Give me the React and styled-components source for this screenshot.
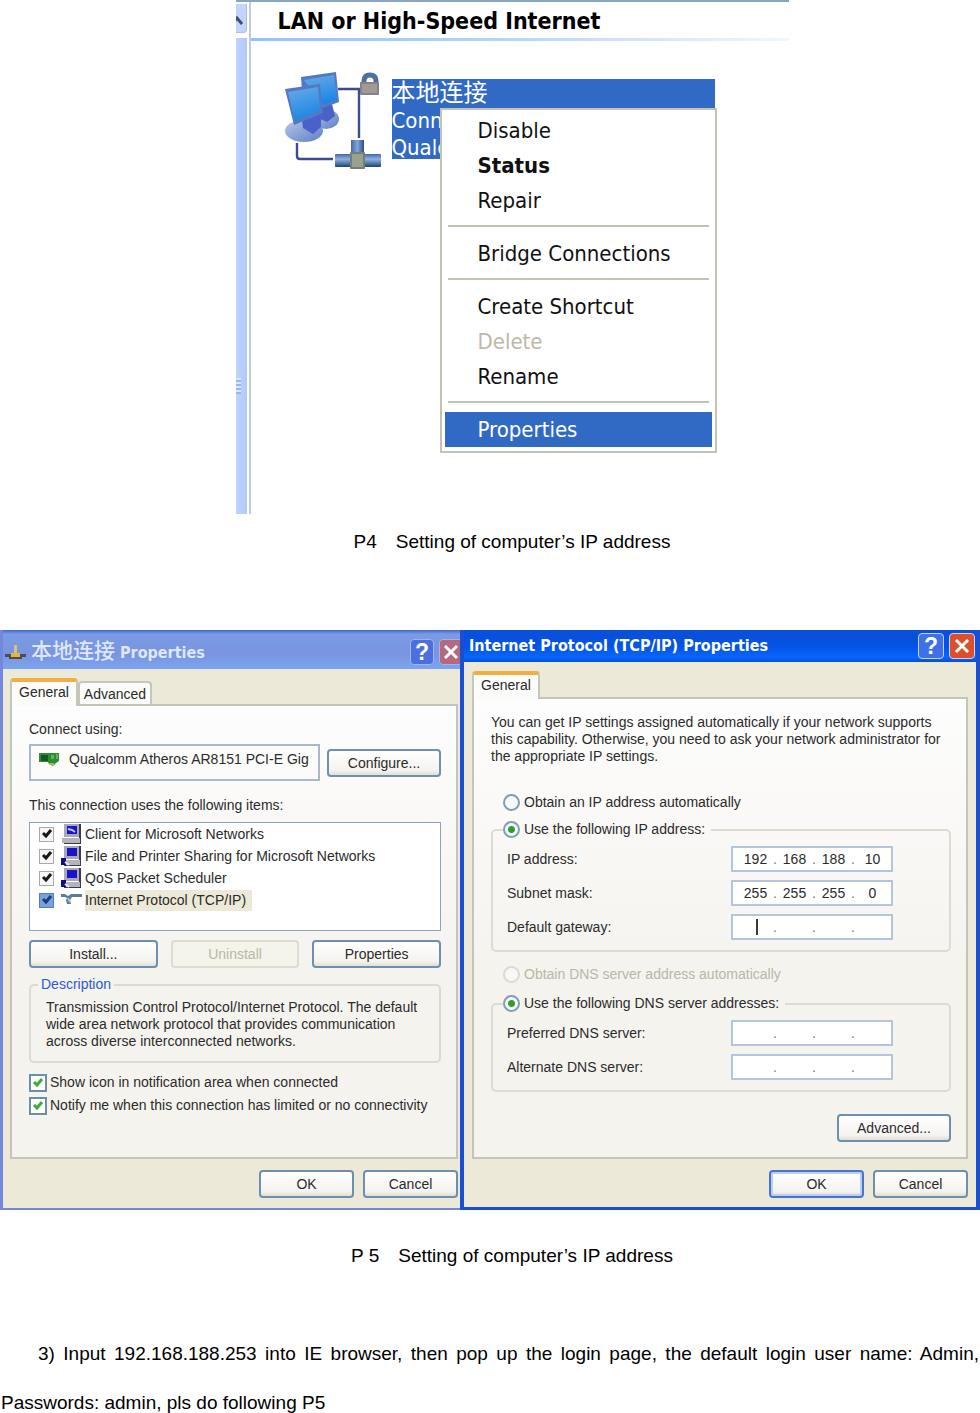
import React from "react";
import styled, { createGlobalStyle, css } from "styled-components";

const menuGroups = [
  [
    { label: "Disable" },
    { label: "Status", bold: true },
    { label: "Repair" },
  ],
  [{ label: "Bridge Connections" }],
  [
    { label: "Create Shortcut" },
    { label: "Delete", disabled: true },
    { label: "Rename" },
  ],
  [{ label: "Properties", active: true }],
];

const components = [
  { label: "Client for Microsoft Networks", icon: "client" },
  { label: "File and Printer Sharing for Microsoft Networks", icon: "service" },
  { label: "QoS Packet Scheduler", icon: "service" },
  { label: "Internet Protocol (TCP/IP)", icon: "protocol", selected: true },
];

const ipRows = [
  { label: "IP address:", octets: ["192", "168", "188", "10"] },
  { label: "Subnet mask:", octets: ["255", "255", "255", "0"] },
  { label: "Default gateway:", octets: ["", "", "", ""], focused: true },
];

const dnsRows = [
  { label: "Preferred DNS server:", octets: ["", "", "", ""] },
  { label: "Alternate DNS server:", octets: ["", "", "", ""] },
];

function NetworkIcon() {
  return (
    <NetworkSvg viewBox="0 0 100 102" aria-hidden="true">
      <defs>
        <linearGradient id="screen" x1="0" y1="0" x2="0.3" y2="1">
          <stop offset="0" stopColor="#6aaae6" />
          <stop offset="1" stopColor="#1c88e4" />
        </linearGradient>
        <linearGradient id="base" x1="0" y1="0" x2="1" y2="1">
          <stop offset="0" stopColor="#b4c8ea" />
          <stop offset="1" stopColor="#5f7fc4" />
        </linearGradient>
        <linearGradient id="pipe" x1="0" y1="0" x2="0" y2="1">
          <stop offset="0" stopColor="#4668a4" />
          <stop offset="0.4" stopColor="#8fb2e0" />
          <stop offset="1" stopColor="#1f3f78" />
        </linearGradient>
        <linearGradient id="pipeUp" x1="0" y1="0" x2="1" y2="0">
          <stop offset="0" stopColor="#4668a4" />
          <stop offset="0.5" stopColor="#83a6d8" />
          <stop offset="1" stopColor="#2c4c86" />
        </linearGradient>
      </defs>
      <path
        d="M54 19h21v49M13 73v13q0 3 3 3h33"
        fill="none"
        stroke="#3f4a94"
        strokeWidth="2.4"
      />
      <ellipse cx="42" cy="49" rx="13" ry="10" fill="url(#base)" />
      <path d="M35 38l13-4 3 12-8 6-9-4z" fill="#4a62c8" />
      <path d="M17 7l35-5 3 30-16 6-20-4z" fill="#5379c4" />
      <path d="M20 10l30-5 3 25-15 5z" fill="url(#screen)" />
      <ellipse cx="20" cy="61" rx="19" ry="11" fill="url(#base)" />
      <path d="M18 50l19-7v14l-8 7-10-6z" fill="#4a60cc" />
      <path d="M1 19l35-5 3 29-29 12z" fill="#5379c4" />
      <path d="M4 22l30-5 2 23-25 11z" fill="url(#screen)" />
      <path
        d="M80 14v-3q0-6 6-6t6 6v3"
        fill="none"
        stroke="#4f6f9f"
        strokeWidth="5"
      />
      <rect x="76" y="12" width="19" height="13" rx="1" fill="#85808a" />
      <rect x="78" y="14" width="15" height="9" fill="#a39994" />
      <rect x="67" y="70" width="13" height="15" fill="url(#pipeUp)" />
      <rect x="51" y="84" width="46" height="13" rx="1" fill="url(#pipe)" />
      <rect x="66" y="82" width="15" height="17" rx="1" fill="#6f8078" />
      <rect x="68" y="84" width="11" height="13" fill="#97a18d" />
    </NetworkSvg>
  );
}

function ComponentIcon({ type }) {
  if (type === "protocol") {
    return (
      <svg width="22" height="20" viewBox="0 0 22 20" aria-hidden="true">
        <path d="M0 4h4l3 2 3-2h11v3H11l-2 3 1 4H6l-1-4 1-2-2-1H0z" fill="#5b7d9c" />
        <path d="M7 8l2 4" stroke="#a8c4d8" strokeWidth="2" />
      </svg>
    );
  }
  return (
    <svg width="22" height="22" viewBox="0 0 22 22" aria-hidden="true">
      <path d="M18 1h2v20H3v-3h15z" fill="#3a3a4a" />
      <rect x="3" y="1" width="15" height="13" fill="#a8a8b8" />
      <rect x="6" y="3" width="10" height="8" fill="#1a14c8" />
      <rect x="1" y="15" width="18" height="5" fill="#b4b4be" />
      {type === "client" ? (
        <path d="M7 6l4 1 3 2" stroke="#b9c4ff" strokeWidth="2" fill="none" />
      ) : (
        <>
          <path d="M0 13h5v7H0z" fill="#120c86" />
          <path d="M4 17l4 3" stroke="#e6e6ee" strokeWidth="2" />
        </>
      )}
    </svg>
  );
}

function AdapterIcon() {
  return (
    <svg width="21" height="15" viewBox="0 0 21 15" aria-hidden="true">
      <path d="M0 1h20v8l-3 2-3 3-4-2-1-2H0z" fill="#2d8a36" />
      <path d="M2 3h7v6H2z" fill="#14581f" />
      <path d="M12 3h3v4h-3zM17 2h2v5h-2z" fill="#5bb95a" />
      <path d="M9 11h6v2H11z" fill="#a9b848" />
    </svg>
  );
}

function PlugIcon() {
  return (
    <svg width="21" height="17" viewBox="0 0 21 17" aria-hidden="true">
      <path d="M9 1h3v9H9z" fill="#dcc26a" />
      <path d="M6 9h9l1 5H5z" fill="#e0b64a" />
      <path d="M0 10h6v3H0zM15 10h6v3h-6z" fill="#4a4c58" />
      <path d="M4 14h13" stroke="#5d4c2c" strokeWidth="2" />
    </svg>
  );
}

function CloseIcon() {
  return (
    <svg width="18" height="18" viewBox="0 0 18 18" aria-hidden="true">
      <path d="M3 3l12 12M15 3L3 15" stroke="#fff" strokeWidth="3" />
    </svg>
  );
}

function IpField({ id, label, octets, focused }) {
  return (
    <FieldRow>
      <label htmlFor={`${id}-0`}>{label}</label>
      <IpBox>
        {octets.map((value, i) => (
          <React.Fragment key={i}>
            {i > 0 && <Dot>.</Dot>}
            <OctetCell $caret={focused && i === 0}>
              <Octet
                id={`${id}-${i}`}
                defaultValue={value}
                aria-label={`${label} ${i + 1}`}
              />
            </OctetCell>
          </React.Fragment>
        ))}
      </IpBox>
    </FieldRow>
  );
}

function ConnectionFigure() {
  return (
    <Explorer>
      <Sidebar>
        <SidebarTop>
          <svg width="8" height="12" viewBox="0 0 8 12" aria-hidden="true">
            <path d="M-4 9L1 3l5 6" fill="none" stroke="#44506e" strokeWidth="3" />
          </svg>
        </SidebarTop>
        <SidebarThumb>
          <Grip />
        </SidebarThumb>
      </Sidebar>
      <ExplorerBody>
        <GroupTitle>LAN or High-Speed Internet</GroupTitle>
        <Connection>
          <NetworkIcon />
          <ConnectionText>
            <span>本地连接</span>
            <span>Conn</span>
            <span>Qualc</span>
            <Menu>
              {menuGroups.map((group, i) => (
                <React.Fragment key={i}>
                  {i > 0 && <Separator />}
                  {group.map((item) => (
                    <MenuItem
                      key={item.label}
                      type="button"
                      disabled={item.disabled}
                      $bold={item.bold}
                      $active={item.active}
                    >
                      {item.label}
                    </MenuItem>
                  ))}
                </React.Fragment>
              ))}
            </Menu>
          </ConnectionText>
        </Connection>
      </ExplorerBody>
    </Explorer>
  );
}

function ConnectionDialog() {
  return (
    <Dialog $inactive>
      <TitleBar $inactive>
        <PlugIcon />
        <Title>
          <ChineseName>本地连接</ChineseName> Properties
        </Title>
        <TitleButton type="button" aria-label="Help" $inactive>
          ?
        </TitleButton>
        <TitleButton type="button" aria-label="Close" $inactive $close>
          <CloseIcon />
        </TitleButton>
      </TitleBar>
      <DialogBody $inactive>
        <Tabs>
          <Tab type="button" $active>
            General
          </Tab>
          <Tab type="button">Advanced</Tab>
        </Tabs>
        <Panel>
          <Text>Connect using:</Text>
          <AdapterRow>
            <AdapterBox>
              <AdapterIcon />
              <AdapterName>Qualcomm Atheros AR8151 PCI-E Gig</AdapterName>
            </AdapterBox>
            <Button type="button" $width={114}>
              Configure...
            </Button>
          </AdapterRow>
          <Text>This connection uses the following items:</Text>
          <List>
            {components.map((item) => (
              <ListRow key={item.label}>
                <ListCheck type="checkbox" defaultChecked $selected={item.selected} />
                <ComponentIcon type={item.icon} />
                <ListLabel $selected={item.selected}>{item.label}</ListLabel>
              </ListRow>
            ))}
          </List>
          <ButtonRow>
            <Button type="button">Install...</Button>
            <Button type="button" disabled>
              Uninstall
            </Button>
            <Button type="button">Properties</Button>
          </ButtonRow>
          <Description>
            <legend>Description</legend>
            <Text>
              Transmission Control Protocol/Internet Protocol. The default
              wide area network protocol that provides communication
              across diverse interconnected networks.
            </Text>
          </Description>
          <Options>
            <OptionRow>
              <Check type="checkbox" defaultChecked />
              Show icon in notification area when connected
            </OptionRow>
            <OptionRow>
              <Check type="checkbox" defaultChecked />
              Notify me when this connection has limited or no connectivity
            </OptionRow>
          </Options>
        </Panel>
        <Footer $inactive>
          <Button type="button" $width={95}>
            OK
          </Button>
          <Button type="button" $width={95}>
            Cancel
          </Button>
        </Footer>
      </DialogBody>
    </Dialog>
  );
}

function TcpDialog() {
  return (
    <Dialog>
      <TitleBar>
        <Title>Internet Protocol (TCP/IP) Properties</Title>
        <TitleButton type="button" aria-label="Help">
          ?
        </TitleButton>
        <TitleButton type="button" aria-label="Close" $close>
          <CloseIcon />
        </TitleButton>
      </TitleBar>
      <DialogBody>
        <Tabs>
          <Tab type="button" $active>
            General
          </Tab>
        </Tabs>
        <Panel>
          <Text>
            You can get IP settings assigned automatically if your network supports
            this capability. Otherwise, you need to ask your network administrator for
            the appropriate IP settings.
          </Text>
          <RadioRow $first>
            <Radio type="radio" name="ip" />
            Obtain an IP address automatically
          </RadioRow>
          <Group>
            <legend>
              <RadioLabel>
                <Radio type="radio" name="ip" defaultChecked />
                Use the following IP address:
              </RadioLabel>
            </legend>
            {ipRows.map((row, i) => (
              <IpField key={row.label} id={`ip${i}`} {...row} />
            ))}
          </Group>
          <RadioRow $disabled>
            <Radio type="radio" name="dns" disabled />
            Obtain DNS server address automatically
          </RadioRow>
          <Group>
            <legend>
              <RadioLabel>
                <Radio type="radio" name="dns" defaultChecked />
                Use the following DNS server addresses:
              </RadioLabel>
            </legend>
            {dnsRows.map((row, i) => (
              <IpField key={row.label} id={`dns${i}`} {...row} />
            ))}
          </Group>
          <AdvancedRow>
            <Button type="button" $width={114}>
              Advanced...
            </Button>
          </AdvancedRow>
        </Panel>
        <Footer>
          <Button type="button" $width={95} $primary>
            OK
          </Button>
          <Button type="button" $width={95}>
            Cancel
          </Button>
        </Footer>
      </DialogBody>
    </Dialog>
  );
}

function App() {
  return (
    <>
      <GlobalStyle />
      <Page>
        <FigureBlock>
          <ConnectionFigure />
          <Caption>P4&emsp;Setting of computer’s IP address</Caption>
        </FigureBlock>
        <Dialogs>
          <ConnectionDialog />
          <TcpDialog />
        </Dialogs>
        <FigureBlock $second>
          <Caption>P 5&emsp;Setting of computer’s IP address</Caption>
        </FigureBlock>
        <Step>
          3) Input 192.168.188.253 into IE browser, then pop up the login page,
          the default login user name: Admin, Passwords: admin, pls do following
          P5
        </Step>
      </Page>
    </>
  );
}

const GlobalStyle = createGlobalStyle`
  * {
    box-sizing: border-box;
  }
  body {
    margin: 0;
    background: #ffffff;
    color: #000000;
    font-family: "Liberation Sans", Arial, "Noto Sans CJK SC", sans-serif;
  }
  button, input {
    margin: 0;
    padding: 0;
    font-family: inherit;
    font-size: inherit;
    color: inherit;
  }
`;

const Page = styled.main`
  width: 100%;
`;

const FigureBlock = styled.figure`
  margin: 0;
  padding: ${(p) => (p.$second ? "21px 0 49px 44px" : "0 0 64px 44px")};
`;

const Caption = styled.figcaption`
  font-size: 19px;
  line-height: 49px;
  text-align: center;
`;

const Step = styled.p`
  margin: 0;
  padding: 0 1px;
  font-size: 19px;
  line-height: 49px;
  text-align: justify;
  text-indent: 37px;
`;

/* explorer window */

const Explorer = styled.div`
  display: flex;
  max-width: 553px;
  height: 514px;
  margin: 0 auto 3px;
  border-top: 2px solid #87a3c6;
  font-family: "DejaVu Sans Condensed", "Noto Sans CJK SC", sans-serif;
`;

const Sidebar = styled.div`
  display: flex;
  flex-direction: column;
  gap: 5px;
  width: 15px;
  padding: 2px 2px 0 0;
  border-right: 2px solid #bccbe6;
`;

const SidebarTop = styled.div`
  height: 29px;
  padding-top: 8px;
  background: #c3d4fd;
  border-right: 1px solid #a9c0f0;
  border-bottom: 1px solid #a9c0f0;
  border-radius: 0 0 4px 0;
`;

const SidebarThumb = styled.div`
  display: flex;
  align-items: center;
  flex: 1;
  padding-top: 220px;
  background: linear-gradient(90deg, #bfd3ff, #b4c8fb);
`;

const Grip = styled.div`
  width: 5px;
  height: 16px;
  background: repeating-linear-gradient(#dce8ff 0 2px, #9db5ee 2px 4px);
`;

const ExplorerBody = styled.div`
  flex: 1;
`;

const GroupTitle = styled.h2`
  margin: 0;
  padding: 2px 0 0 27px;
  height: 39px;
  border-bottom: 3px solid;
  border-image: linear-gradient(90deg, #93c2fb, #b7d5fc 50%, #f2f7ff) 1;
  font-size: 23px;
  line-height: 35px;
  font-weight: 700;
`;

const Connection = styled.div`
  display: flex;
  align-items: flex-start;
  padding: 29px 74px 0 33px;
`;

const NetworkSvg = styled.svg`
  flex: none;
  width: 100px;
  height: 102px;
`;

const ConnectionText = styled.div`
  position: relative;
  display: flex;
  flex-direction: column;
  flex: 1;
  margin: 9px 0 0 8px;
  padding-top: 1px;
  height: 80px;
  background: #316ac5;
  color: #ffffff;
  font-size: 22px;
  line-height: 27px;

  span:first-child {
    font-size: 24px;
  }
`;

const Menu = styled.div`
  position: absolute;
  top: 29px;
  left: 48px;
  width: 277px;
  padding: 3px 3px 4px;
  border: 2px solid #c5c2b4;
  background: #ffffff;
`;

const MenuItem = styled.button`
  display: block;
  width: 100%;
  height: 35px;
  padding-left: 33px;
  border: 0;
  background: ${(p) => (p.$active ? "#316ac5" : "transparent")};
  color: ${(p) => (p.$active ? "#ffffff" : "#111111")};
  font-size: 22px;
  font-weight: ${(p) => (p.$bold ? 700 : 400)};
  text-align: left;

  &:disabled {
    color: #bdb9a9;
  }
`;

const Separator = styled.hr`
  height: 2px;
  margin: 7px 3px 9px;
  border: 0;
  background: #c5c2b4;
`;

/* property dialogs */

const Dialogs = styled.div`
  display: grid;
  grid-template-columns: 460fr 520fr;
  font-size: 14px;
  line-height: 17px;
  color: #2b2b2b;
`;

const Dialog = styled.section`
  display: flex;
  flex-direction: column;
  overflow: hidden;
  background: #ece9d8;
  border-style: solid;
  border-color: ${(p) => (p.$inactive ? "#7388dc" : "#1a4fd2")};
  border-width: ${(p) => (p.$inactive ? "0 0 2px 3px" : "0 4px 3px 4px")};
`;

const TitleBar = styled.header`
  display: flex;
  align-items: center;
  gap: 5px;
  ${(p) =>
    p.$inactive
      ? css`
          height: 39px;
          padding: 5px 0 0 2px;
          margin: 0 -3px 0 0;
          background: linear-gradient(#4468c8, #7a9be4 4px, #7a94e0 60%, #7ba4f0);
          color: #dfe7fb;
        `
      : css`
          height: 32px;
          margin: 0 -4px;
          padding: 0 5px 0 9px;
          background: linear-gradient(#0a4fd8, #0453e4 50%, #0866fc 85%, #0450d4);
          color: #ffffff;
        `}
`;

const Title = styled.h3`
  flex: 1;
  margin: 0;
  font-family: "DejaVu Sans Condensed", "Noto Sans CJK SC", sans-serif;
  font-size: 16px;
  font-weight: 700;
  line-height: 24px;
  white-space: nowrap;
`;

const ChineseName = styled.span`
  font-size: 21px;
  font-weight: 500;
`;

const TitleButton = styled.button`
  display: flex;
  align-items: center;
  justify-content: center;
  width: ${(p) => (p.$inactive ? "24px" : "26px")};
  height: 26px;
  border: 1px solid ${(p) => (p.$inactive ? "#9db4f0" : "#c5d5fb")};
  border-radius: 4px;
  background: ${(p) => {
    if (p.$close) return p.$inactive ? "#b4697c" : "#dd4f2c";
    return p.$inactive ? "#4a6fe0" : "#3f70ea";
  }};
  color: #ffffff;
  font-size: 23px;
  font-weight: 700;
`;

const DialogBody = styled.div`
  display: flex;
  flex-direction: column;
  flex: 1;
  padding: ${(p) => (p.$inactive ? "9px 2px 10px 7px" : "9px 8px 9px")};
`;

const Tabs = styled.div`
  display: flex;
  align-items: flex-end;
  height: 26px;
`;

const Tab = styled.button`
  position: relative;
  border: 2px solid #c6c6bc;
  border-bottom: 0;
  border-radius: 4px 4px 0 0;
  background: #fbfbfa;
  ${(p) =>
    p.$active
      ? css`
          z-index: 1;
          width: 68px;
          height: 28px;
          margin-bottom: -2px;
          padding-bottom: 5px;
          border-top: 4px solid #efb041;
        `
      : css`
          width: 74px;
          height: 23px;
        `}
`;

const Panel = styled.div`
  flex: 1;
  padding: 15px 15px 15px 17px;
  border: 2px solid #c3c5bb;
  background: linear-gradient(#fdfdfd, #f5f3ee 60%);
`;

const Text = styled.p`
  margin: 0;
  white-space: pre-line;
`;

const Button = styled.button`
  flex: ${(p) => (p.$width ? "none" : "1")};
  width: ${(p) => (p.$width ? `${p.$width}px` : "auto")};
  height: 28px;
  border: 2px solid ${(p) => (p.$primary ? "#4a74cc" : "#6f8fae")};
  border-radius: 4px;
  background: linear-gradient(#ffffff, #f4f3ee 80%, #e2dfd4);
  box-shadow: ${(p) => (p.$primary ? "inset 0 0 0 2px #b9cff6" : "none")};

  &:disabled {
    border-color: #dedccf;
    background: #f5f4ea;
    color: #b9b7a8;
  }
`;

const AdapterRow = styled.div`
  display: flex;
  align-items: center;
  gap: 7px;
  margin: 6px 0 16px;
`;

const AdapterBox = styled.div`
  display: flex;
  align-items: center;
  gap: 9px;
  flex: 1;
  min-width: 0;
  height: 37px;
  padding: 0 4px 6px 8px;
  border: 2px solid #a9b9cb;
`;

const AdapterName = styled.span`
  white-space: nowrap;
`;

const List = styled.div`
  height: 109px;
  margin: 8px 0 9px;
  padding: 0 9px;
  border: 1px solid #8fa3b6;
  background: #ffffff;
`;

const ListRow = styled.label`
  display: flex;
  align-items: center;
  height: 22px;
  gap: 2px;

  svg {
    margin-left: 5px;
  }
`;

const ListLabel = styled.span`
  padding: 2px 6px 2px 0;
  background: ${(p) => (p.$selected ? "#ece9d8" : "transparent")};
`;

const tick = (color) =>
  `url("data:image/svg+xml,%3Csvg xmlns='http://www.w3.org/2000/svg' viewBox='0 0 12 12'%3E%3Cpath d='M2 5l3 3 5-6' fill='none' stroke='${color}' stroke-width='3'/%3E%3C/svg%3E") center / 12px no-repeat`;

const ListCheck = styled.input`
  appearance: none;
  width: 15px;
  height: 15px;
  border: 1px solid ${(p) => (p.$selected ? "#4f7fc4" : "#a9a9a9")};
  background: ${(p) => (p.$selected ? "#79a2dd" : "#f6f6f6")};

  &:checked {
    background: ${(p) =>
      p.$selected ? `${tick("%231c3c78")} #79a2dd` : `${tick("%23181818")} #f6f6f6`};
  }
`;

const ButtonRow = styled.div`
  display: flex;
  gap: 13px;
`;

const Description = styled.fieldset`
  margin: 8px 0;
  padding: 6px 10px 11px 7px;
  border: 2px solid #dddbd0;
  border-radius: 5px;

  legend {
    padding: 0 3px;
    color: #2c5bd4;
  }
  p {
    padding-left: 8px;
  }
`;

const Options = styled.div`
  display: flex;
  flex-direction: column;
`;

const OptionRow = styled.label`
  display: flex;
  align-items: center;
  gap: 3px;
  height: 23px;
  white-space: nowrap;
`;

const Check = styled.input`
  appearance: none;
  width: 18px;
  height: 18px;
  border: 2px solid #6a90a8;
  background: #ffffff;

  &:checked {
    background: ${tick("%233cae34")} #ffffff;
  }
`;

const Footer = styled.footer`
  display: flex;
  justify-content: flex-end;
  gap: 9px;
  padding-top: 11px;
`;

const RadioLabel = styled.label`
  display: flex;
  align-items: center;
  gap: 4px;
`;

const RadioRow = styled(RadioLabel)`
  margin: ${(p) => (p.$first ? "29px 0 10px 12px" : "14px 0 12px 12px")};
  color: ${(p) => (p.$disabled ? "#b9b7a8" : "inherit")};
`;

const Radio = styled.input`
  appearance: none;
  width: 17px;
  height: 17px;
  border: 2px solid #7f9fb4;
  border-radius: 50%;
  background: #f7f9f8;

  &:checked {
    background: radial-gradient(circle, #2f9e2c 0 3px, #f7f9f8 4px);
  }
  &:disabled {
    border-color: #dddbcf;
  }
`;

const Group = styled.fieldset`
  display: flex;
  flex-direction: column;
  gap: 8px;
  margin: 0;
  padding: 8px 56px 10px 10px;
  border: 2px solid #dddcd3;
  border-radius: 5px;

  legend {
    padding: 0 6px 0 0;
  }
`;

const FieldRow = styled.div`
  display: flex;
  align-items: center;
  justify-content: space-between;
  padding-left: 4px;
`;

const IpBox = styled.div`
  display: flex;
  align-items: center;
  width: 162px;
  height: 26px;
  padding: 0 1px 0 5px;
  border: 2px solid #b3c6de;
  background: #ffffff;
`;

const OctetCell = styled.div`
  position: relative;
  flex: 1;

  ${(p) =>
    p.$caret &&
    css`
      &::after {
        content: "";
        position: absolute;
        top: 0;
        left: 50%;
        width: 2px;
        height: 16px;
        background: #3a3a3a;
      }
    `}
`;

const Octet = styled.input`
  display: block;
  width: 100%;
  border: 0;
  outline: 0;
  background: transparent;
  text-align: center;
`;

const Dot = styled.span`
  width: 4px;
  color: #777777;
`;

const AdvancedRow = styled.div`
  display: flex;
  justify-content: flex-end;
  margin-top: 22px;
`;

export default App;
